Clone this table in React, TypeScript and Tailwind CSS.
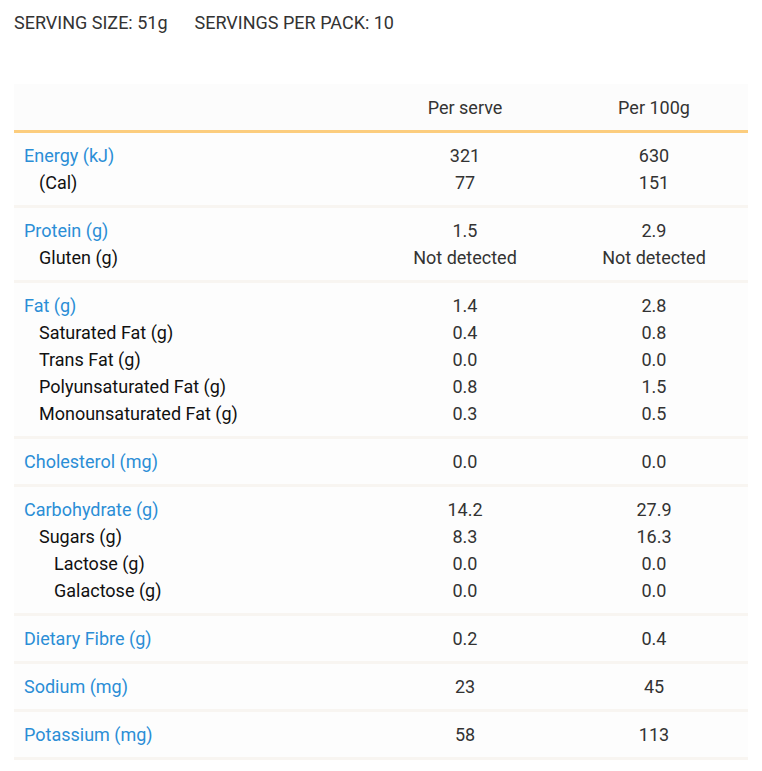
type Row = { label: string; serve: string; per100: string; level?: 0 | 1 | 2 };

const groups: Row[][] = [
  [
    { label: 'Energy (kJ)', serve: '321', per100: '630' },
    { label: '(Cal)', serve: '77', per100: '151', level: 1 },
  ],
  [
    { label: 'Protein (g)', serve: '1.5', per100: '2.9' },
    { label: 'Gluten (g)', serve: 'Not detected', per100: 'Not detected', level: 1 },
  ],
  [
    { label: 'Fat (g)', serve: '1.4', per100: '2.8' },
    { label: 'Saturated Fat (g)', serve: '0.4', per100: '0.8', level: 1 },
    { label: 'Trans Fat (g)', serve: '0.0', per100: '0.0', level: 1 },
    { label: 'Polyunsaturated Fat (g)', serve: '0.8', per100: '1.5', level: 1 },
    { label: 'Monounsaturated Fat (g)', serve: '0.3', per100: '0.5', level: 1 },
  ],
  [{ label: 'Cholesterol (mg)', serve: '0.0', per100: '0.0' }],
  [
    { label: 'Carbohydrate (g)', serve: '14.2', per100: '27.9' },
    { label: 'Sugars (g)', serve: '8.3', per100: '16.3', level: 1 },
    { label: 'Lactose (g)', serve: '0.0', per100: '0.0', level: 2 },
    { label: 'Galactose (g)', serve: '0.0', per100: '0.0', level: 2 },
  ],
  [{ label: 'Dietary Fibre (g)', serve: '0.2', per100: '0.4' }],
  [{ label: 'Sodium (mg)', serve: '23', per100: '45' }],
  [{ label: 'Potassium (mg)', serve: '58', per100: '113' }],
];

function NutrientRow({ row }: { row: Row }) {
  const level = row.level ?? 0;
  const labelClass =
    level === 0 ? 'pl-[10px] text-[#2b8ed6]' : level === 1 ? 'pl-[25px] text-[#111]' : 'pl-[40px] text-[#111]';
  return (
    <div className="grid h-[27px] grid-cols-[1fr_190px_188px] items-center">
      <span className={labelClass}>{row.label}</span>
      <span className="text-center text-[#333]">{row.serve}</span>
      <span className="text-center text-[#333]">{row.per100}</span>
    </div>
  );
}

export default function App() {
  return (
    <div className="min-h-screen bg-white px-[14px] pt-[9px] font-['Roboto',sans-serif] text-[18px] leading-[27px]">
      <div className="flex gap-[27px] text-[#333]">
        <span>SERVING SIZE: 51g</span>
        <span>SERVINGS PER PACK: 10</span>
      </div>

      <div className="mt-[48px] bg-[#fdfdfd]">
        <div className="grid h-[46px] grid-cols-[1fr_190px_188px] items-center bg-[#fcfcfc] text-[#333]">
          <span />
          <span className="text-center">Per serve</span>
          <span className="text-center">Per 100g</span>
        </div>
        <div className="h-[3px] bg-[#fccd7e]" />
        {groups.map((group, i) => (
          <div key={i} className="border-b-[3px] border-[#f8f5f1] py-[9px]">
            {group.map((row) => (
              <NutrientRow key={row.label} row={row} />
            ))}
          </div>
        ))}
      </div>
    </div>
  );
}
